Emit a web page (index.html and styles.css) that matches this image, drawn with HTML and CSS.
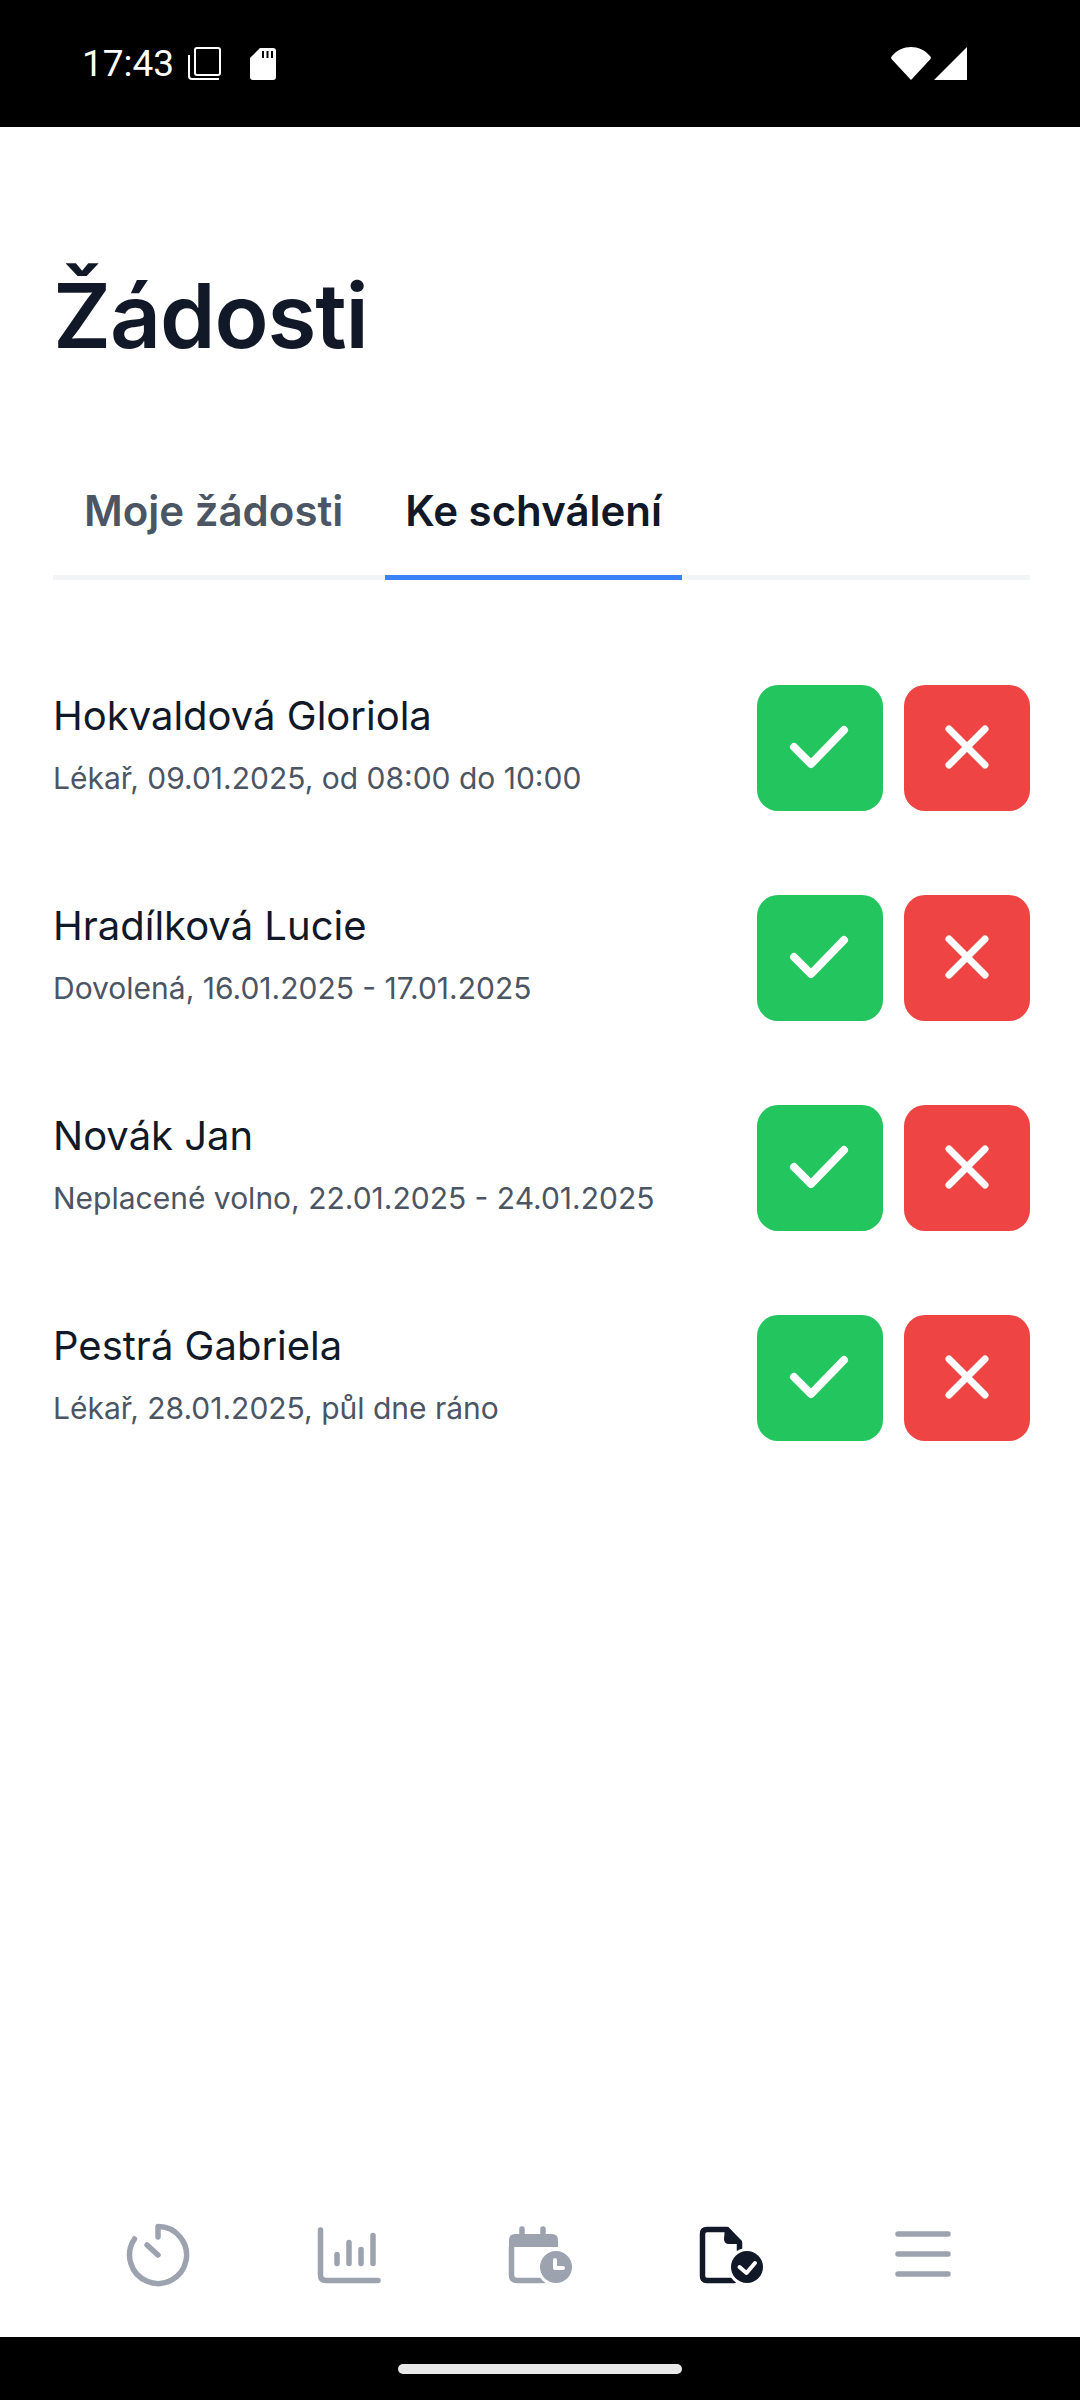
FILE: index.html
```html
<!DOCTYPE html>
<html lang="cs">

<head>
    <meta charset="UTF-8">
    <title>Žádosti</title>

    <link rel="stylesheet" href="styles.css">

</head>

<body>

    <div id="container">
        <div class="status-bar">
            <span class="status-time">17:43</span>
            <svg class="status-copy" width="33" height="33" viewBox="0 0 33 33">
                <rect x="7" y="1" width="25" height="27" rx="2" fill="none" stroke="#fff" stroke-width="2" />
                <path d="M1 8 V29 Q1 32 4 32 H31" fill="none" stroke="#fff" stroke-width="2" />
            </svg>
            <svg class="status-sd" width="26" height="32" viewBox="0 0 26 32">
                <path d="M10 0 H23 Q26 0 26 3 V29 Q26 32 23 32 H3 Q0 32 0 29 V10 Z" fill="#fff" />
                <path d="M13 3 V10 M17.5 3 V10 M22 3 V10" stroke="#000" stroke-width="2" />
            </svg>
            <div class="status-right">
                <svg width="40" height="33" viewBox="0 0 40 33">
                    <path d="M20 33 L0.5 12 Q-0.5 10.5 1 9 C6 3 13 0 20 0 C27 0 34 3 39 9 Q40.5 10.5 39.5 12 Z" fill="#fff" />
                </svg>
                <svg width="33" height="33" viewBox="0 0 33 33">
                    <path d="M33 0 V33 H0 Z" fill="#fff" />
                </svg>
            </div>
        </div>

        <div class="content">
            <h1 class="title">Žádosti</h1>

            <div class="tabs">
                <div class="tab">Moje žádosti</div>
                <div class="tab active">Ke schválení</div>
            </div>

            <div class="list">
                <div class="row">
                    <div class="row-text">
                        <div class="row-name">Hokvaldová Gloriola</div>
                        <div class="row-detail">Lékař, 09.01.2025, od 08:00 do 10:00</div>
                    </div>
                    <button class="action approve"><svg width="84" height="84" viewBox="0 0 84 84"><path d="M16 41 L33 58 L66 24" /></svg></button>
                    <button class="action reject"><svg width="84" height="84" viewBox="0 0 84 84"><path d="M24 23 L60 59 M60 23 L24 59" /></svg></button>
                </div>
                <div class="row">
                    <div class="row-text">
                        <div class="row-name">Hradílková Lucie</div>
                        <div class="row-detail">Dovolená, 16.01.2025 - 17.01.2025</div>
                    </div>
                    <button class="action approve"><svg width="84" height="84" viewBox="0 0 84 84"><path d="M16 41 L33 58 L66 24" /></svg></button>
                    <button class="action reject"><svg width="84" height="84" viewBox="0 0 84 84"><path d="M24 23 L60 59 M60 23 L24 59" /></svg></button>
                </div>
                <div class="row">
                    <div class="row-text">
                        <div class="row-name">Novák Jan</div>
                        <div class="row-detail">Neplacené volno, 22.01.2025 - 24.01.2025</div>
                    </div>
                    <button class="action approve"><svg width="84" height="84" viewBox="0 0 84 84"><path d="M16 41 L33 58 L66 24" /></svg></button>
                    <button class="action reject"><svg width="84" height="84" viewBox="0 0 84 84"><path d="M24 23 L60 59 M60 23 L24 59" /></svg></button>
                </div>
                <div class="row">
                    <div class="row-text">
                        <div class="row-name">Pestrá Gabriela</div>
                        <div class="row-detail">Lékař, 28.01.2025, půl dne ráno</div>
                    </div>
                    <button class="action approve"><svg width="84" height="84" viewBox="0 0 84 84"><path d="M16 41 L33 58 L66 24" /></svg></button>
                    <button class="action reject"><svg width="84" height="84" viewBox="0 0 84 84"><path d="M24 23 L60 59 M60 23 L24 59" /></svg></button>
                </div>
            </div>
        </div>

        <div class="bottom-nav">
            <!-- Timer -->
            <svg class="nav-icon" viewBox="0 0 84 84">
                <path d="M18.5 26 A28.5 28.5 0 1 0 42 13.5 V24 M31 32 L42 42" />
            </svg>
            <!-- Chart -->
            <svg class="nav-icon" viewBox="0 0 84 84">
                <path d="M13.5 17 V62 Q13.5 67.5 19 67.5 H71 M30 41.5 V50.5 M42 29.5 V50.5 M54 36.5 V50.5 M66 22.5 V50.5" />
            </svg>
            <!-- Calendar with clock -->
            <svg class="nav-icon" viewBox="0 0 84 84">
                <path d="M24 16 V24 M45 16 V24 M13.5 34 V62 Q13.5 67.5 19 67.5 H46" />
                <path class="solid" d="M11 34 V27 Q11 21 17 21 H54 Q60 21 60 27 V34 Z" />
                <circle cx="58" cy="54" r="19" class="gap" />
                <circle cx="58" cy="54" r="16" class="solid" />
                <path class="inner" d="M57 47 V55 H65" />
            </svg>
            <!-- Document with check, current page -->
            <svg class="nav-icon current" viewBox="0 0 84 84">
                <path d="M45 67.5 H18 Q13.5 67.5 13.5 63 V21 Q13.5 16.5 18 16.5 H38 L50.5 30 V38" />
                <path class="solid" d="M36 14 H39 L53 28 V31 H40 Q35 31 35 26 Z" />
                <circle cx="58" cy="54" r="19" class="gap" />
                <circle cx="58" cy="54" r="16" class="solid" />
                <path class="inner" d="M50.5 54 L57.5 60 L66 50" />
            </svg>
            <!-- Menu -->
            <svg class="nav-icon" viewBox="0 0 84 84">
                <path d="M18 21 H68 M18 41 H68 M18 61 H68" />
            </svg>
        </div>

        <div class="nav-bar">
            <div class="nav-pill"></div>
        </div>
    </div>

</body>

</html>
```

FILE: styles.css
```css
* {
    box-sizing: border-box;
}

body {
    margin: 0;
    font-family: Inter, "Noto Sans", sans-serif;
    color: #111827;
    background-color: #fff;
}

#container {
    width: 1080px;
    height: 2400px;
    display: flex;
    flex-direction: column;
}

.status-bar {
    height: 127px;
    flex-shrink: 0;
    background-color: #000;
    color: #fff;
    display: flex;
    align-items: center;
    padding: 0 113px 0 82px;
}

.status-time {
    font-family: Roboto, sans-serif;
    font-size: 37px;
    line-height: 36px;
    margin-right: 14px;
}

.status-sd {
    margin-left: 29px;
}

.status-right {
    margin-left: auto;
    display: flex;
    gap: 3px;
}

.content {
    flex: 1;
    padding: 0 50px 0 53px;
}

.title {
    margin: 126px 0 0;
    font-size: 89px;
    line-height: 126px;
    font-weight: 600;
    letter-spacing: -1.1px;
}

.tabs {
    margin-top: 76px;
    display: flex;
    gap: 22px;
    padding-left: 11px;
    border-bottom: 5px solid #f3f4f6;
}

.tab {
    padding: 0 20px;
    height: 125px;
    margin-bottom: -5px;
    border-bottom: 5px solid transparent;
    font-size: 42px;
    line-height: 111px;
    font-weight: 600;
    color: #4b5563;
}

.tab.active {
    color: #111827;
    border-bottom-color: #3b82f6;
}

.list {
    margin-top: 105px;
    display: flex;
    flex-direction: column;
    gap: 84px;
}

.row {
    display: flex;
    align-items: center;
    gap: 21px;
}

.row-text {
    flex: 1;
    margin-bottom: 2px;
}

.row-name {
    font-size: 40px;
    line-height: 48px;
}

.row-detail {
    margin-top: 14px;
    font-size: 30px;
    line-height: 48px;
    color: #4b5563;
}

.action {
    width: 126px;
    height: 126px;
    padding: 0;
    border: none;
    border-radius: 21px;
    display: flex;
    align-items: center;
    justify-content: center;
}

.action svg {
    fill: none;
    stroke: #fff;
    stroke-width: 8;
    stroke-linecap: round;
    stroke-linejoin: round;
}

.reject svg {
    stroke-width: 7;
}

.approve {
    background-color: #22c55e;
}

.reject {
    background-color: #ef4444;
}

.bottom-nav {
    height: 164px;
    flex-shrink: 0;
    padding: 0 62px;
    display: grid;
    grid-template-columns: repeat(5, 191px);
    justify-items: center;
    align-items: center;
}

.nav-icon {
    width: 84px;
    height: 84px;
    fill: none;
    stroke: #9ca3af;
    stroke-width: 5.5;
    stroke-linecap: round;
    stroke-linejoin: round;
    color: #9ca3af;
}

.nav-icon.current {
    stroke: #111827;
    color: #111827;
}

.nav-icon .solid {
    fill: currentColor;
    stroke: none;
}

.nav-icon .gap {
    fill: #fff;
    stroke: none;
}

.nav-icon .inner {
    stroke: #fff;
    stroke-width: 4;
}

.nav-bar {
    height: 63px;
    flex-shrink: 0;
    background-color: #000;
    display: flex;
    justify-content: center;
    padding-top: 27px;
}

.nav-pill {
    width: 284px;
    height: 10px;
    border-radius: 5px;
    background-color: #e8e8e8;
}
```
